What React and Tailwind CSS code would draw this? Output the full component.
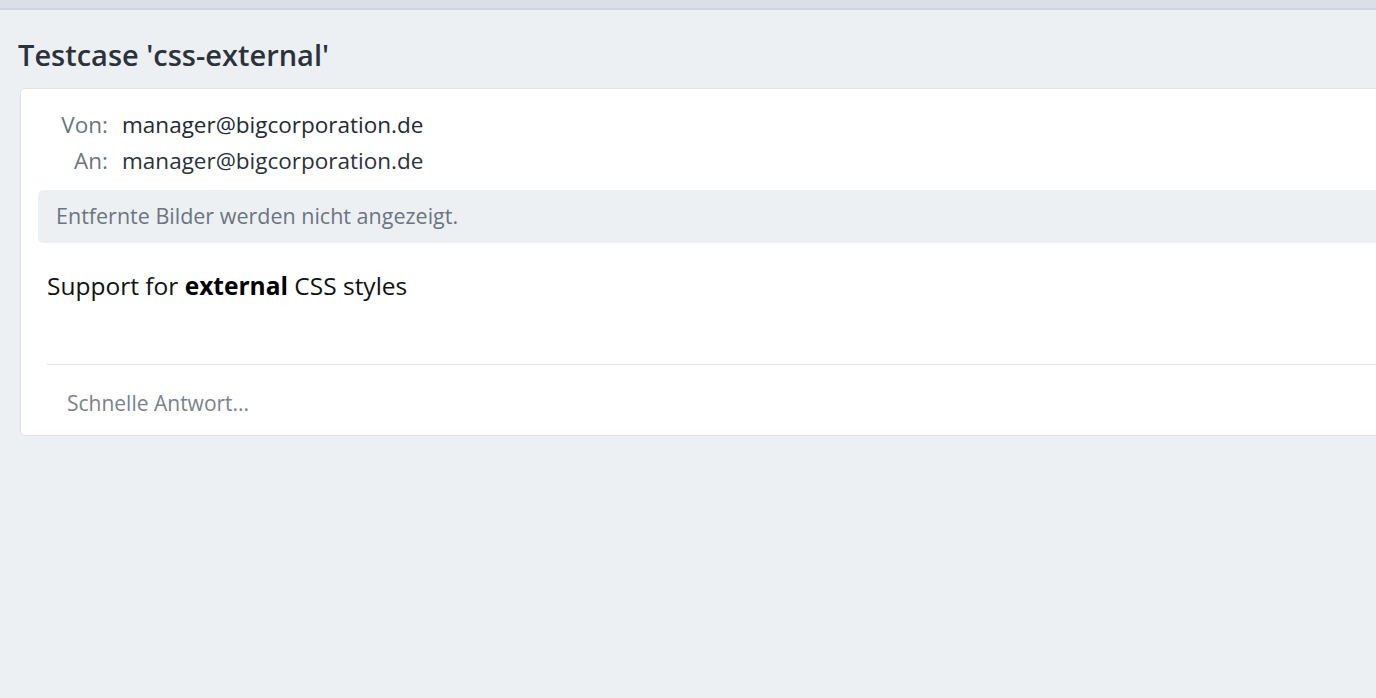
export default function App() {
  return (
    <div
      className="h-[698px] overflow-hidden bg-[#edf0f3] text-[#1f2328]"
      style={{ fontFamily: '"Open Sans", "Noto Sans", sans-serif' }}
    >
      {/* top strip */}
      <div className="h-[10px] bg-[#dbdfe7] border-b-2 border-[#cfd4dc]" />

      <h1 className="mt-[27px] px-[18px] text-[29px] leading-[36px] font-semibold text-[#2b323b]">
        Testcase 'css-external'
      </h1>

      {/* message card */}
      <div className="mt-[15px] ml-5 -mr-4 bg-white border border-[#dfe3e8] rounded-[5px]">
        <div className="pt-[18px]">
          <div className="flex items-center h-9">
            <span className="w-[87px] text-right text-[22.5px] text-[#6b7580]">Von:</span>
            <span className="ml-[14px] text-[22.5px] font-medium text-[#232a33]">manager@bigcorporation.de</span>
          </div>
          <div className="flex items-center h-9">
            <span className="w-[87px] text-right text-[22.5px] text-[#6b7580]">An:</span>
            <span className="ml-[14px] text-[22.5px] text-[#2b323b]">manager@bigcorporation.de</span>
          </div>
        </div>

        <div className="mt-[11px] ml-[17px] h-[53px] flex items-center px-[18px] bg-[#edf0f3] rounded-[5px] text-[21.5px] text-[#6b7580]">
          Entfernte Bilder werden nicht angezeigt.
        </div>

        <div className="mt-[27px] pl-[26px] text-[24.5px] leading-[32px] text-[#111]">
          Support for <b className="font-bold text-black">external</b> CSS styles
        </div>

        <div className="mt-[62px] ml-[26px] border-t border-[#dfe3e8]" />

        <div className="pt-6 pb-[18px] pl-[46px] text-[21px] leading-7 text-[#7a828c]">
          Schnelle Antwort...
        </div>
      </div>
    </div>
  );
}
